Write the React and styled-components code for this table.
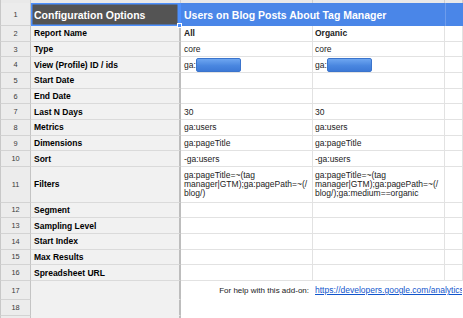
import React from 'react'
import styled, { createGlobalStyle } from 'styled-components'

const Global = createGlobalStyle`
  * { box-sizing: border-box; }
  html, body { margin: 0; padding: 0; background: #fff; overflow: hidden; }
  body { font-family: "Liberation Sans", Arial, sans-serif; }
`

const COLS = '31px 150px 132px 132px 1fr'

const Sheet = styled.div`
  width: 463px;
  height: 318px;
  overflow: hidden;
  display: flex;
  flex-direction: column;
`

const Row = styled.div`
  display: grid;
  grid-template-columns: ${COLS};
  height: ${p => p.$h}px;
  flex-shrink: 0;
`

const HeadStrip = styled.div`
  background: #e9e9e9;
  border-right: 1px solid #cfcfcf;
  border-left: ${p => (p.$first ? '1px solid #c8c8c8' : 'none')};
`

const Num = styled.div`
  background: #ececec;
  border-left: 1px solid #c8c8c8;
  border-right: 1px solid #c4c4c4;
  border-bottom: 1px solid #d3d3d3;
  display: flex;
  align-items: center;
  justify-content: center;
  font-size: 7.4px;
  color: #3a3a3a;
`

const TitleDark = styled.div`
  position: relative;
  background: #545454;
  color: #fff;
  font-weight: bold;
  font-size: 10.5px;
  padding: 0 3px;
  display: flex;
  align-items: center;
  box-shadow: inset 0 0 0 1.5px #4d90fe;
  border-right: 2px solid #4d90fe;
  z-index: 1;
`

const Handle = styled.span`
  position: absolute;
  right: -3px;
  bottom: -2px;
  width: 5px;
  height: 5px;
  background: #4d90fe;
  border: 1px solid #fff;
`

const TitleBlue = styled.div`
  grid-column: span ${p => p.$span || 1};
  background: #4a86e8;
  color: #fff;
  font-weight: bold;
  font-size: 10.5px;
  padding: 0 3px;
  display: flex;
  align-items: center;
  white-space: nowrap;
  border-left: ${p => (p.$edge ? '1px solid #6d9cec' : 'none')};
`

const Label = styled.div`
  background: #f1f1f1;
  border-right: 2px solid #bdbdbd;
  border-bottom: 1px solid ${p => (p.$open ? '#f1f1f1' : '#dadada')};
  padding: 0 3px;
  display: flex;
  align-items: center;
  font-weight: bold;
  font-size: 8.5px;
  color: #000;
  white-space: nowrap;
`

const Value = styled.div`
  grid-column: span ${p => p.$span || 1};
  background: #fff;
  border-right: 1px solid ${p => (p.$open ? '#fff' : '#e2e2e2')};
  border-bottom: 1px solid ${p => (p.$open ? '#fff' : '#e2e2e2')};
  padding: 0 3px 0 ${p => (p.$tight ? 2 : 3)}px;
  display: flex;
  align-items: center;
  justify-content: ${p => (p.$right ? 'flex-end' : 'flex-start')};
  font-size: ${p => (p.$small ? 8 : 8.5)}px;
  font-weight: ${p => (p.$bold ? 'bold' : 'normal')};
  color: #222;
  white-space: nowrap;
  overflow: hidden;
`

const Lines = styled.div`
  line-height: 9px;
`

const Blot = styled.span`
  display: inline-block;
  width: 45px;
  height: 14px;
  border-radius: 2px;
  border: 1px solid #3b74cc;
  background: linear-gradient(#6ea6f0, #4a87e0 55%, #3d79d6);
  margin-left: 0.5px;
`

const Link = styled.a`
  color: #1155cc;
  text-decoration: underline;
`

const Partial = styled.div`
  background: ${p => p.$bg};
  border-left: ${p => (p.$first ? '1px solid #c8c8c8' : 'none')};
  border-right: ${p => p.$br || 'none'};
`

const redacted = (
  <>
    ga:<Blot />
  </>
)

const rows = [
  { n: 2, label: 'Report Name', b: 'All', c: 'Organic', bold: true },
  { n: 3, label: 'Type', b: 'core', c: 'core' },
  { n: 4, label: 'View (Profile) ID / ids', b: redacted, c: redacted },
  { n: 5, label: 'Start Date' },
  { n: 6, label: 'End Date' },
  { n: 7, label: 'Last N Days', b: '30', c: '30' },
  { n: 8, label: 'Metrics', b: 'ga:users', c: 'ga:users' },
  { n: 9, label: 'Dimensions', b: 'ga:pageTitle', c: 'ga:pageTitle' },
  { n: 10, label: 'Sort', b: '-ga:users', c: '-ga:users' },
  {
    n: 11,
    label: 'Filters',
    h: 35.5,
    b: ['ga:pageTitle=~(tag', 'manager|GTM);ga:pagePath=~(/', 'blog/)'],
    c: ['ga:pageTitle=~(tag', 'manager|GTM);ga:pagePath=~(/', 'blog/);ga:medium==organic'],
  },
  { n: 12, label: 'Segment' },
  { n: 13, label: 'Sampling Level' },
  { n: 14, label: 'Start Index' },
  { n: 15, label: 'Max Results' },
  { n: 16, label: 'Spreadsheet URL' },
]

const show = v =>
  Array.isArray(v) ? (
    <Lines>
      {v.map((l, i) => (
        <div key={i}>{l}</div>
      ))}
    </Lines>
  ) : (
    v
  )

const App = () => {
  return (
    <>
      <Global />
      <Sheet>
        <Row $h={3}>
          <HeadStrip $first />
          <HeadStrip />
          <HeadStrip />
          <HeadStrip />
          <HeadStrip />
        </Row>
        <Row $h={23}>
          <Num>1</Num>
          <TitleDark>
            Configuration Options
            <Handle />
          </TitleDark>
          <TitleBlue $span={2}>Users on Blog Posts About Tag Manager</TitleBlue>
          <TitleBlue $edge />
        </Row>
        {rows.map(r => (
          <Row key={r.n} $h={r.h || 15.68}>
            <Num>{r.n}</Num>
            <Label>{r.label}</Label>
            <Value $bold={r.bold}>{show(r.b)}</Value>
            <Value $bold={r.bold} $tight>
              {show(r.c)}
            </Value>
            <Value />
          </Row>
        ))}
        <Row $h={19.5}>
          <Num>17</Num>
          <Label $open />
          <Value $open $right $small>
            For help with this add-on:
          </Value>
          <Value $open $span={2} $tight>
            <Link href="#">
              https://developers.google.com/analytics/solutions/google-analytics-spreadsheet-add-on
            </Link>
          </Value>
        </Row>
        <Row $h={15.7}>
          <Num>18</Num>
          <Label $open />
          <Value $open />
          <Value $open />
          <Value $open />
        </Row>
        <Row $h={4}>
          <Partial $bg="#ececec" $first $br="1px solid #c4c4c4" />
          <Partial $bg="#f1f1f1" $br="2px solid #bdbdbd" />
          <Partial $bg="#fff" />
          <Partial $bg="#fff" />
          <Partial $bg="#fff" />
        </Row>
      </Sheet>
    </>
  )
}

export default App
